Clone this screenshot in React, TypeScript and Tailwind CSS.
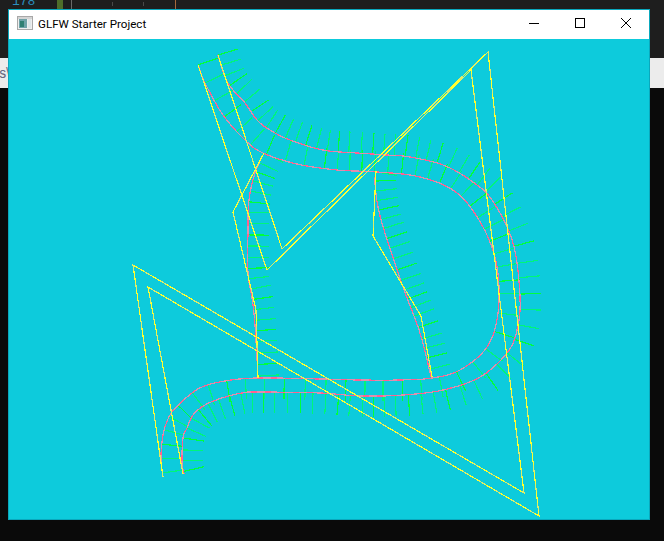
import React from "react";

type P = [number, number];

const curveA: P[] = [[198,65],[205,83],[223,115],[245,140],[263,153],[297,164],[337,170],[377,172],[420,177],[457,193],[483,227],[497,267],[498,313],[487,347],[460,370],[432,378],[400,380],[360,380],[320,379],[258,378],[225,381],[202,387],[187,397],[172,412],[165,427],[162,442],[161,460],[163,477]];
const curveB: P[] = [[218,55],[225,77],[233,90],[245,103],[257,120],[270,130],[290,140],[323,150],[357,153],[387,155],[410,157],[443,165],[470,180],[492,200],[513,243],[520,297],[517,330],[507,353],[480,377],[443,390],[403,395],[360,396],[320,393],[258,392],[242,393],[222,398],[205,405],[193,415],[187,428],[183,438],[182,462],[184,474]];
const curveC: P[] = [[264,153],[255,173],[249,200],[248,230],[248,273],[252,298],[255,325],[258,378]];
const curveD: P[] = [[376,172],[375,183],[378,207],[385,233],[403,287],[420,333],[431,377]];

function smooth(pts: P[]): P[] {
  const out: P[] = [];
  for (let i = 0; i < pts.length - 1; i++) {
    const p0 = pts[Math.max(i - 1, 0)];
    const p1 = pts[i];
    const p2 = pts[i + 1];
    const p3 = pts[Math.min(i + 2, pts.length - 1)];
    for (let k = 0; k < 16; k++) {
      const t = k / 16;
      const t2 = t * t;
      const t3 = t2 * t;
      out.push([
        0.5 * (2 * p1[0] + (p2[0] - p0[0]) * t + (2 * p0[0] - 5 * p1[0] + 4 * p2[0] - p3[0]) * t2 + (3 * p1[0] - p0[0] - 3 * p2[0] + p3[0]) * t3),
        0.5 * (2 * p1[1] + (p2[1] - p0[1]) * t + (2 * p0[1] - 5 * p1[1] + 4 * p2[1] - p3[1]) * t2 + (3 * p1[1] - p0[1] - 3 * p2[1] + p3[1]) * t3),
      ]);
    }
  }
  out.push(pts[pts.length - 1]);
  return out;
}

function toPoints(pts: P[]) {
  return pts.map((p) => `${p[0]},${p[1]}`).join(" ");
}

function ticks(pts: P[], spacing: (dist: number) => number, len: number) {
  const s = smooth(pts);
  const out: { x1: number; y1: number; x2: number; y2: number }[] = [];
  let next = 0;
  let dist = 0;
  for (let i = 0; i < s.length - 1; i++) {
    const a = s[Math.max(i - 4, 0)];
    const b = s[Math.min(i + 4, s.length - 1)];
    const tx = b[0] - a[0];
    const ty = b[1] - a[1];
    const tl = Math.hypot(tx, ty) || 1;
    const d = Math.hypot(s[i + 1][0] - s[i][0], s[i + 1][1] - s[i][1]);
    if (dist >= next) {
      out.push({ x1: s[i][0], y1: s[i][1], x2: s[i][0] + (ty / tl) * len, y2: s[i][1] - (tx / tl) * len });
      next = dist + spacing(dist);
    }
    dist += d;
  }
  return out;
}

const polyA: P[] = [[198,65],[267,270],[471,70],[524,493],[133,265],[163,477]];
const polyB: P[] = [[218,55],[282,249],[488,52],[539,516],[148,287],[183,474]];
const polyC: P[] = [[264,153],[233,212],[253,297],[256,310],[258,378]];
const polyD: P[] = [[376,171],[373,236],[421,316],[432,377]];

const spacingA = (d: number) => (d < 170 ? 18 : d < 420 ? 11.5 : d < 800 ? 17.7 : 14);
const spacingB = (d: number) => (d > 320 && d < 560 ? 14 : 10.5);

function Scene() {
  const curves = [curveA, curveB, curveC, curveD];
  const allTicks = [
    ...ticks(curveA, spacingA, 21),
    ...ticks(curveB, spacingB, 21),
    ...ticks(curveC, () => 9.5, 21),
    ...ticks(curveD, () => 9, 21),
  ];
  return (
    <svg width={640} height={480} viewBox="9 39 640 480" shapeRendering="crispEdges" className="block">
      {allTicks.map((t, i) => (
        <line key={i} x1={t.x1} y1={t.y1} x2={t.x2} y2={t.y2} stroke={i % 3 === 0 ? "#00ff3c" : "#00f57a"} strokeWidth={1.2} />
      ))}
      {curves.map((c, i) => (
        <g key={i} fill="none" strokeWidth={1.25}>
          <polyline points={toPoints(smooth(c))} stroke="#e08fae" />
          <polyline points={toPoints(smooth(c))} stroke="#ff6292" strokeDasharray="6 8" />
        </g>
      ))}
      {[polyA, polyB, polyC, polyD].map((c, i) => (
        <g key={i} fill="none" strokeWidth={1.2}>
          <polyline points={toPoints(c)} stroke="#dcec6c" />
          <polyline points={toPoints(c)} stroke="#ffff30" strokeDasharray="12 7" />
        </g>
      ))}
    </svg>
  );
}

function AppIcon() {
  return (
    <svg width={16} height={14} viewBox="0 0 16 14" className="block">
      <rect x={0.5} y={0.5} width={15} height={13} fill="#eeeeee" stroke="#a8a8a8" />
      <rect x={1} y={1} width={14} height={2} fill="#d4d4d4" />
      <rect x={2} y={3} width={8} height={9} fill="#6fa3a8" />
      <rect x={3} y={5} width={4} height={6} fill="#2f7f72" />
      <rect x={11} y={3} width={3} height={9} fill="#dfe6e8" />
    </svg>
  );
}

export default function App() {
  return (
    <div className="relative w-[664px] h-[541px] overflow-hidden flex flex-col bg-[#0a0a0a] font-['Liberation_Sans',sans-serif]">
      <div className="h-[58px] shrink-0 bg-[#1e1e1e] relative overflow-hidden">
        <span className="absolute left-[12px] top-[-6px] text-[13px] leading-[16px] text-[#2b8fbf] font-['Liberation_Mono',monospace]">178</span>
        <div className="absolute left-[57px] top-0 w-[6px] h-[9px] bg-[#4e6e2a]" />
        <div className="absolute left-[71px] top-0 w-px h-[9px] bg-[#6a6a6a]" />
        <div className="absolute left-[112px] top-[2px] w-px h-[4px] bg-[#4a4a4a]" />
        <div className="absolute left-[143px] top-[2px] w-px h-[4px] bg-[#4a4a4a]" />
        <div className="absolute left-[175px] top-0 w-px h-[9px] bg-[#a8683a]" />
      </div>
      <div className="h-[30px] shrink-0 bg-[#ececec] flex items-center overflow-hidden">
        <span className="text-[14px] leading-[16px] text-[#6a6a80] font-['Inter',sans-serif] ml-[-1px]">s\</span>
      </div>
      <div className="absolute left-[8px] top-[9px] w-[642px] h-[511px] border border-[#0aa8bd] bg-[#0dcbdc] flex flex-col">
        <div className="h-[29px] shrink-0 bg-white flex items-center pl-[8px] pb-[3px]">
          <AppIcon />
          <span className="ml-[5px] mt-[2px] text-[11.6px] leading-[16px] text-black font-['Roboto',sans-serif]">GLFW Starter Project</span>
          <div className="ml-auto flex h-full items-center text-black">
            <div className="w-[46px] h-full flex items-center justify-center">
              <svg width={10} height={10} viewBox="0 0 10 10" shapeRendering="crispEdges"><path d="M0 5.5H10" stroke="#000" /></svg>
            </div>
            <div className="w-[46px] h-full flex items-center justify-center">
              <svg width={10} height={10} viewBox="0 0 10 10" shapeRendering="crispEdges"><rect x={0.5} y={0.5} width={9} height={9} fill="none" stroke="#000" /></svg>
            </div>
            <div className="w-[46px] h-full flex items-center justify-center">
              <svg width={10} height={10} viewBox="0 0 10 10"><path d="M0 0L10 10M10 0L0 10" stroke="#000" /></svg>
            </div>
          </div>
        </div>
        <Scene />
      </div>
    </div>
  );
}
